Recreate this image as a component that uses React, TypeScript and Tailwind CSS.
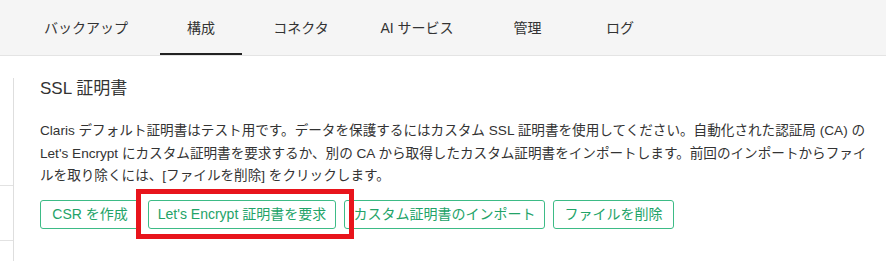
import React from 'react';

const font = { fontFamily: '"Liberation Sans", "Noto Sans CJK JP", sans-serif' };

interface Tab {
  label: string;
  width: string;
  active?: boolean;
}

const tabs: Tab[] = [
  { label: 'バックアップ', width: 'w-[140px]' },
  { label: '構成', width: 'w-[82px]', active: true },
  { label: 'コネクタ', width: 'w-[110px]' },
  { label: 'AI サービス', width: 'w-[114px]' },
  { label: '管理', width: 'w-[99px]' },
  { label: 'ログ', width: 'w-[78px]' },
];

const buttons = [
  { label: 'CSR を作成', width: 'w-[100px]' },
  { label: "Let's Encrypt 証明書を要求", width: 'w-[188px]' },
  { label: 'カスタム証明書のインポート', width: 'w-[201px]' },
  { label: 'ファイルを削除', width: 'w-[121px]' },
];

export default function App() {
  return (
    <div className="w-[886px] h-[261px] bg-white overflow-hidden text-[#333]" style={font}>
      {/* Tabs */}
      <div className="h-[56px] bg-[#f5f5f5] border-b border-[#e4e4e4] flex pl-[16px] gap-[4px]">
        {tabs.map((t) => (
          <div
            key={t.label}
            className={`${t.width} h-full flex items-center justify-center text-[14px] pt-[3px] ${
              t.active ? 'border-b-2 border-[#222]' : 'border-b-2 border-transparent'
            }`}
          >
            {t.label}
          </div>
        ))}
      </div>

      <div className="flex mt-[22px]">
        {/* Sidebar stub */}
        <div className="w-[14px] shrink-0 border-r border-[#dedede] h-[200px] flex flex-col">
          <div className="h-[108px] border-b border-[#e2e2e2]" />
          <div className="h-[55px] border-b border-[#e2e2e2]" />
        </div>

        {/* Main */}
        <div className="pl-[26px] min-w-0">
          <h2 className="text-[17px] leading-[22px] mb-[20px]">SSL 証明書</h2>
          <p className="text-[13.6px] leading-[22.5px] whitespace-nowrap text-[#333]">
            Claris デフォルト証明書はテスト用です。データを保護するにはカスタム SSL 証明書を使用してください。自動化された認証局 (CA) の
            <br />
            Let's Encrypt にカスタム証明書を要求するか、別の CA から取得したカスタム証明書をインポートします。前回のインポートからファイ
            <br />
            ルを取り除くには、[ファイルを削除] をクリックします。
          </p>

          <div className="relative flex gap-[8px] mt-[12px]">
            {buttons.map((b) => (
              <button
                key={b.label}
                className={`${b.width} shrink-0 h-[29px] border border-[#3dbb86] rounded-[3px] text-[14px] text-[#22a368] bg-white flex items-center justify-center whitespace-nowrap`}
              >
                {b.label}
              </button>
            ))}
            <div className="absolute left-[96px] top-[-11px] w-[218px] h-[50px] border-[5px] border-[#e8141c] pointer-events-none" />
          </div>
        </div>
      </div>
    </div>
  );
}
